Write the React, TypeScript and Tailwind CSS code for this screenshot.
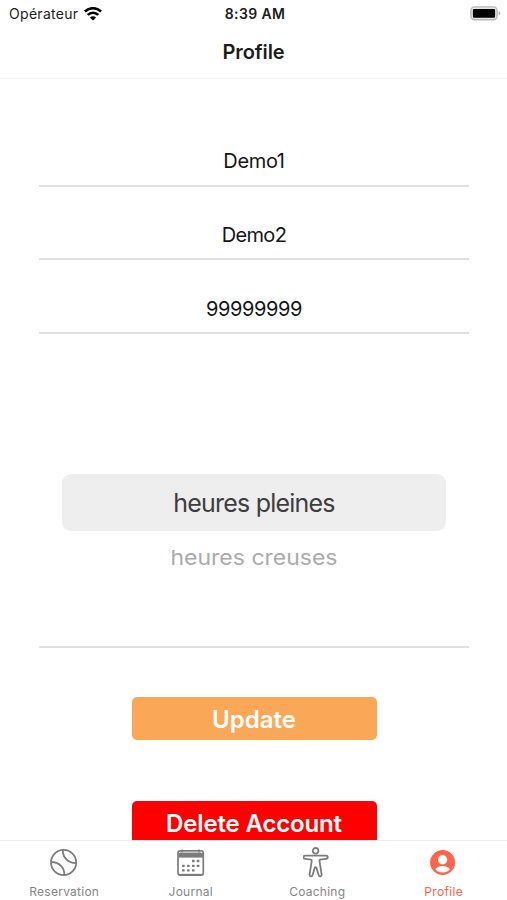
import type { ReactNode } from 'react';

function WifiIcon() {
  return (
    <svg width="18" height="14" viewBox="0 0 18 14" fill="none" stroke="#000" strokeWidth="2.6">
      <path d="M0.9 4.5A11.6 11.6 0 0 1 17.1 4.5" />
      <path d="M3.8 7.9A7.4 7.4 0 0 1 14.2 7.9" />
      <path d="M9 13.5L5.9 10.5A4.3 4.3 0 0 1 12.1 10.5Z" fill="#000" stroke="none" />
    </svg>
  );
}

function BatteryIcon() {
  return (
    <svg width="31" height="15" viewBox="0 0 31 15">
      <rect x="0.9" y="0.9" width="26.2" height="12.8" rx="3.6" fill="#e4e4e4" stroke="#b8b8b8" strokeWidth="1.4" />
      <rect x="2.9" y="2.9" width="22.2" height="8.8" rx="1.2" fill="#000" />
      <path d="M28.6 5.2Q30.3 5.8 30.3 7.3Q30.3 8.8 28.6 9.4Z" fill="#b0b0b0" />
    </svg>
  );
}

function BallIcon() {
  return (
    <svg className="shrink-0" width="28" height="32" viewBox="0 0 28 32" fill="none" stroke="#7c7c7c" strokeWidth="1.8">
      <circle cx="13.6" cy="16.5" r="12.6" />
      <path d="M12.9 4C12.6 11.5 18.1 17.2 26.1 17.2" />
      <path d="M1.1 16C9.1 16 14.6 21.5 14.4 29" />
    </svg>
  );
}

function CalendarIcon() {
  const dots = [
    [16.3, 15], [21.1, 15],
    [6.3, 19.9], [11.3, 19.9], [16.3, 19.9], [21.1, 19.9],
    [6.3, 24.4], [11.3, 24.4], [16.3, 24.4],
  ];
  return (
    <svg className="shrink-0" width="28" height="32" viewBox="0 0 28 32" fill="none">
      <rect x="1" y="4.9" width="25.3" height="24.2" rx="2.2" stroke="#7c7c7c" strokeWidth="1.7" />
      <path d="M1.5 7H26V11.6H1.5Z" fill="#7c7c7c" />
      <path d="M3 6.4H24.3" stroke="#c4c4c4" strokeWidth="1.2" />
      <path d="M5.2 3.4V6.4M22 3.4V6.4" stroke="#7c7c7c" strokeWidth="1.5" />
      <path d="M2.4 28.7H24.9" stroke="#7c7c7c" strokeWidth="1.7" />
      {dots.map(([x, y]) => (
        <rect key={`${x}-${y}`} x={x - 1.3} y={y - 1.2} width="2.6" height="2.4" rx="0.6" fill="#7c7c7c" />
      ))}
    </svg>
  );
}

function BodyIcon() {
  return (
    <svg className="shrink-0" width="28" height="32" viewBox="0.4 0 28 32" fill="none" stroke="#7c7c7c" strokeWidth="1.8" strokeLinejoin="round">
      <circle cx="13" cy="4.8" r="2.8" />
      <path d="M2.8 9.6H23.2C25.8 9.6 25.8 12.7 23.2 12.9L17.7 13.6C17 13.7 16.8 14.3 16.9 15.1L19 28.3C19.3 30.7 16.5 31.2 16 28.9L13.8 21.4H12.2L10 28.9C9.5 31.2 6.7 30.7 7 28.3L9.1 15.1C9.2 14.3 9 13.7 8.3 13.6L2.8 12.9C0.2 12.7 0.2 9.6 2.8 9.6Z" />
    </svg>
  );
}

function PersonIcon() {
  return (
    <svg className="shrink-0" width="28" height="32" viewBox="0 0 28 32">
      <circle cx="12.6" cy="16.5" r="12.5" fill="#fd6449" />
      <circle cx="12.6" cy="13.7" r="4.7" fill="#fff" />
      <path d="M5.2 23.4C6.8 20.9 9.6 20 12.6 20S18.4 20.9 20 23.4C18.1 25.4 15.5 26.4 12.6 26.4S7.1 25.4 5.2 23.4Z" fill="#fff" />
    </svg>
  );
}

function Field({ value, tracking }: { value: string; tracking: string }) {
  return (
    <div className={`flex h-[73.6px] items-end justify-center border-b-2 border-[#e0e0e0] text-[20px] leading-[30px] text-[#151515] ${tracking}`}>
      {value}
    </div>
  );
}

function Tab({ icon, label, style }: { icon: ReactNode; label: string; style: string }) {
  return (
    <div className="flex flex-1 flex-col items-center pt-[5px]">
      {icon}
      <span className={`mt-[6px] text-[12px] leading-[16px] ${style}`}>{label}</span>
    </div>
  );
}

export default function App() {
  return (
    <div className="flex h-[900px] w-[507px] flex-col overflow-hidden bg-white font-['Inter','Liberation_Sans',sans-serif]">
      <header className="h-[79px] shrink-0 border-b border-[#f4f4f4]">
        <div className="grid h-[27px] grid-cols-3 items-center pr-[6px] pl-[9px] text-[14px] text-[#1c1c1c]">
          <div className="flex items-center gap-[6px]">
            <span className="tracking-[0.3px]">Opérateur</span>
            <WifiIcon />
          </div>
          <span className="text-center font-semibold tracking-[0.35px]">8:39 AM</span>
          <div className="flex justify-end">
            <BatteryIcon />
          </div>
        </div>
        <h1 className="text-center text-[20px] leading-[51px] font-semibold tracking-[-0.1px] text-[#1c1c1c]">Profile</h1>
      </header>

      <main className="min-h-0 flex-1 overflow-hidden pt-[34px] pr-[38px] pl-[39px]">
        <Field value="Demo1" tracking="pb-[8.5px] tracking-[-0.35px]" />
        <Field value="Demo2" tracking="pb-[8px] tracking-[-0.7px]" />
        <Field value="99999999" tracking="pb-[8px] tracking-[-0.4px]" />
        <div className="flex h-[314px] flex-col items-center border-b-2 border-[#e0e0e0] pt-[140px]">
          <div className="flex h-[57px] w-[384px] items-center justify-center rounded-[9px] bg-[#eeeeee] pt-[2px] text-[25px] tracking-[-0.8px] text-[#3d3d3d]">
            heures pleines
          </div>
          <div className="mt-[12px] scale-y-90 text-[23px] leading-[30px] text-[#aaaaaa]">heures creuses</div>
        </div>
        <div className="flex flex-col items-center gap-[61px] pt-[49px] text-[24px] font-semibold text-white">
          <button className="h-[43px] w-[245px] rounded-[5px] bg-[#faa757] pt-[3px]">Update</button>
          <button className="h-[44px] w-[245px] rounded-[5px] bg-[#ff0000] pt-[2px] tracking-[-0.15px]">Delete Account</button>
        </div>
      </main>

      <nav className="flex h-[60px] shrink-0 border-t border-[#eeeeee] bg-white pl-px">
        <Tab icon={<BallIcon />} label="Reservation" style="text-[#858585] tracking-[0.25px]" />
        <Tab icon={<CalendarIcon />} label="Journal" style="text-[#858585] tracking-[0.25px]" />
        <Tab icon={<BodyIcon />} label="Coaching" style="text-[#858585] tracking-[0.25px]" />
        <Tab icon={<PersonIcon />} label="Profile" style="text-[#fd6449] tracking-[0.35px]" />
      </nav>
    </div>
  );
}
